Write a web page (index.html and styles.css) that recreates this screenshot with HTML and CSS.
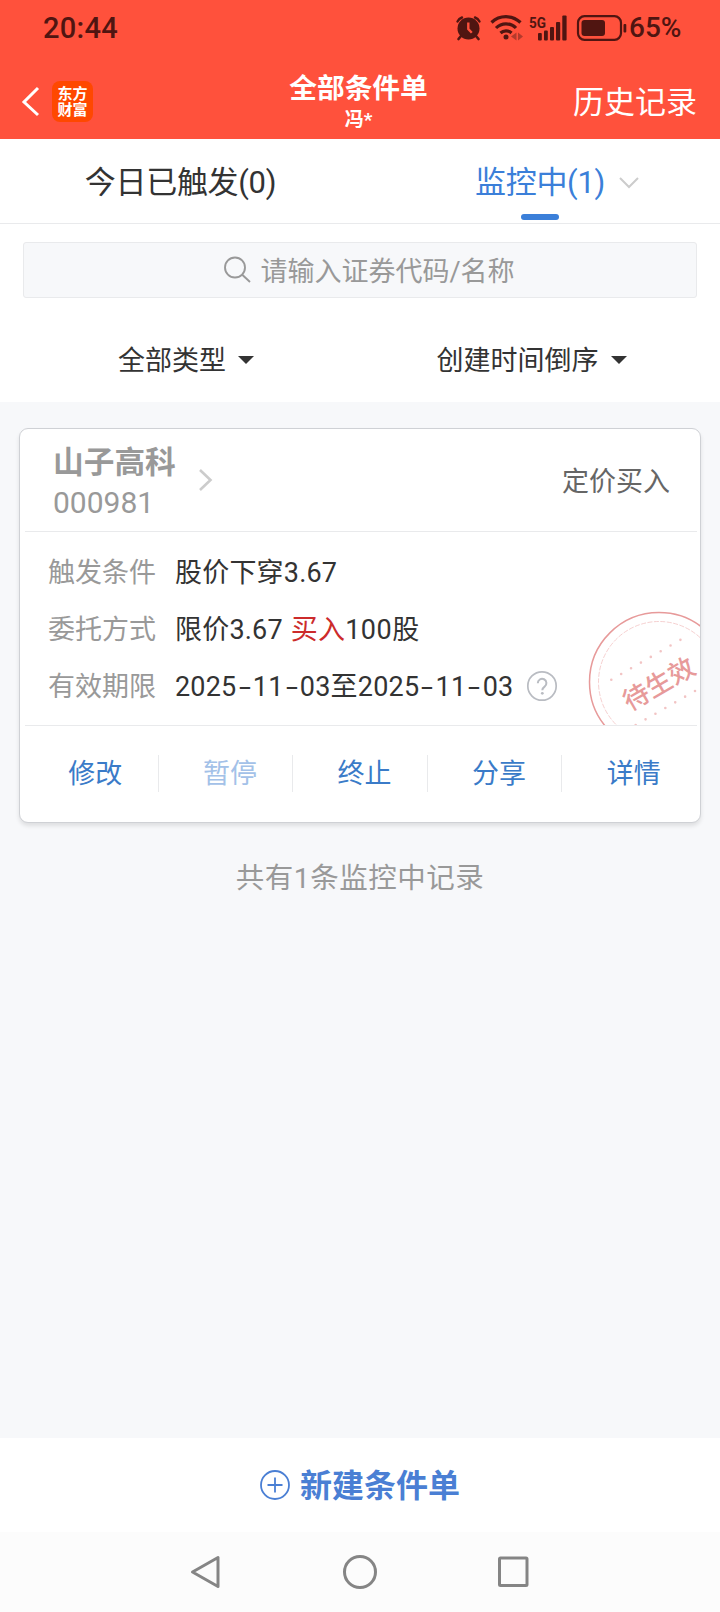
FILE: index.html
```html
<!DOCTYPE html>
<html lang="zh-CN">

<head>
    <meta charset="UTF-8">
    <meta name="viewport" content="width=device-width, initial-scale=1.0">
    <title>全部条件单</title>
    <link rel="stylesheet" href="styles.css">
</head>

<body>
    <header class="top">
        <div class="status">
            <span class="clock">20:44</span>
            <svg class="status-icons" width="174" height="30" viewBox="454 12 174 30">
                <!-- alarm -->
                <g fill="#501511">
                    <circle cx="468.500" cy="27.500" r="11"/>
                    <path d="M461 35l-2.500 3M476 35l2.500 3" stroke="#501511" stroke-width="2.600" stroke-linecap="round"/>
                    <path d="M457.500 20.500a8 8 0 0 1 4.500-4M479.500 20.500a8 8 0 0 0-4.500-4" fill="none" stroke="#501511" stroke-width="2.400" stroke-linecap="round"/>
                </g>
                <path d="M468.300 21.500v6.500l3.500 3.800" fill="none" stroke="#ff513c" stroke-width="2.400"/>
                <!-- wifi -->
                <g fill="none" stroke="#501511" stroke-width="3.200">
                    <path d="M491.500 21.500a21 21 0 0 1 29 0"/>
                    <path d="M496 27a14 14 0 0 1 20 0"/>
                    <path d="M500.500 32a8 8 0 0 1 11 0"/>
                </g>
                <circle cx="506" cy="36" r="2.500" fill="#501511"/>
                <path d="M516.500 31.500v8l-5.500-4zM518 31.500v8l5-4z" fill="#b33a2c"/>
                <text class="net" x="529" y="26.500" textLength="17" lengthAdjust="spacingAndGlyphs">5G</text>
                <g fill="#501511">
                    <rect x="538" y="32" width="3.800" height="7.500" rx="1"/>
                    <rect x="544" y="29.500" width="3.800" height="10" rx="1"/>
                    <rect x="550" y="26" width="4" height="13.500" rx="1"/>
                    <rect x="556" y="21" width="4.200" height="18.500" rx="1"/>
                    <rect x="562.300" y="14.500" width="4.300" height="25" rx="1"/>
                </g>
                <!-- battery -->
                <rect x="578" y="15.200" width="43" height="23.600" rx="6.500" fill="none" stroke="#501511" stroke-width="2.200"/>
                <rect x="581.500" y="19" width="23.500" height="16" rx="3" fill="#501511"/>
                <rect x="623.500" y="23" width="2.800" height="8.500" rx="1" fill="#501511"/>
            </svg>
            <span class="percent">65%</span>
        </div>
        <div class="header">
            <div class="header-left">
                <svg width="20" height="32" viewBox="0 0 20 32">
                    <path d="M18 2L4 16l14 13" fill="none" stroke="#fff" stroke-width="3"/>
                </svg>
                <div class="logo"><span>东方</span><span>财富</span></div>
            </div>
            <div class="header-title">
                <h1>全部条件单</h1>
                <p>冯*</p>
            </div>
            <a class="history">历史记录</a>
        </div>
    </header>

    <nav class="tabs">
        <a class="tab">今日已触发(0)</a>
        <a class="tab active">监控中(1)
            <svg width="20" height="12" viewBox="0 0 20 12">
                <path d="M1 1l9 9 9-9" fill="none" stroke="#ccc" stroke-width="2"/>
            </svg>
        </a>
    </nav>

    <section class="filter-area">
        <div class="search">
            <svg width="28" height="28" viewBox="0 0 28 28" fill="none" stroke="#999" stroke-width="1.900">
                <circle cx="12" cy="11.500" r="10"/>
                <path d="M19 18.500l8 7.500"/>
            </svg>
            <span>请输入证券代码/名称</span>
        </div>
        <div class="filters">
            <a class="filter">全部类型<i class="caret"></i></a>
            <a class="filter">创建时间倒序<i class="caret"></i></a>
        </div>
    </section>

    <main>
        <article class="card">
            <div class="card-head">
                <div class="stock">
                    <h2>山子高科</h2>
                    <p>000981</p>
                </div>
                <svg class="arrow" width="15" height="24" viewBox="0 0 15 24">
                    <path d="M2 2l10.500 10L2 22" fill="none" stroke="#ccc" stroke-width="2.600"/>
                </svg>
                <span class="kind">定价买入</span>
            </div>
            <div class="card-body">
                <div class="row"><label>触发条件</label><span>股价下穿3.67</span></div>
                <div class="row"><label>委托方式</label><span>限价3.67 <em>买入</em><b>100</b>股</span></div>
                <div class="row">
                    <label>有效期限</label>
                    <span>2025<i class="dash">-</i>11<i class="dash">-</i>03至2025<i class="dash">-</i>11<i class="dash">-</i>03</span>
                    <svg class="help" width="32" height="32" viewBox="0 0 32 32">
                        <circle cx="16" cy="16" r="14.200" fill="none" stroke="#b9bcc2" stroke-width="1.700"/>
                        <path d="M11.800 13.200a4.300 4.300 0 1 1 6.800 3.400c-1.500 1.100-2.300 1.800-2.300 3.600" fill="none" stroke="#b9bcc2" stroke-width="2"/>
                        <circle cx="16.300" cy="23.300" r="1.400" fill="#b9bcc2"/>
                    </svg>
                </div>
                <svg class="stamp" width="113" height="115" viewBox="588 610 113 115">
                    <circle cx="660" cy="682" r="69.500" fill="none" stroke="#e79a9a" stroke-width="1.500"/>
                    <circle cx="660" cy="682" r="60.500" fill="none" stroke="#f2c4c4" stroke-width=".8" stroke-dasharray="5 1.500"/>
                    <path class="dots" d="M612.300 679.700L682 639.500M696 691L628 730"/>
                    <text x="659" y="693" transform="rotate(-30 660 682)">待生效</text>
                </svg>
            </div>
            <div class="actions">
                <a>修改</a>
                <a class="disabled">暂停</a>
                <a>终止</a>
                <a>分享</a>
                <a>详情</a>
            </div>
        </article>
        <p class="total">共有1条监控中记录</p>
    </main>

    <footer>
        <a class="create">
            <svg width="30" height="30" viewBox="0 0 30 30" fill="none" stroke="#4a7fd4" stroke-width="1.800">
                <circle cx="15" cy="15" r="14"/>
                <path d="M15 7.500v15M7.500 15h15"/>
            </svg>
            <span>新建条件单</span>
        </a>
        <div class="system-nav">
            <svg width="32" height="36" viewBox="0 0 32 36"><path d="M28 3.500v29L2.500 18z"/></svg>
            <svg width="36" height="36" viewBox="0 0 36 36"><circle cx="18" cy="18" r="15.500"/></svg>
            <svg width="32" height="36" viewBox="0 0 32 36"><rect x="1.500" y="4" width="27.500" height="27.500" rx="1"/></svg>
        </div>
    </footer>
</body>

</html>
```

FILE: styles.css
```css
* {
    box-sizing: border-box;
}

body {
    margin: 0;
    height: 1612px;
    display: flex;
    flex-direction: column;
    font-family: Roboto, "Noto Sans CJK SC", sans-serif;
    font-size: 27px;
    line-height: 1;
    color: #333;
    background-color: #f7f8fa;
}

h1, h2, p {
    margin: 0;
}

i, em {
    font-style: normal;
}

svg {
    flex: none;
}

/* header */
.top {
    height: 139px;
    background-color: #ff513c;
    color: white;
}

.status {
    height: 64px;
    padding: 0 37px 9px 43px;
    display: flex;
    align-items: center;
    color: #501511;
    font-weight: 500;
}

.clock {
    font-size: 29px;
    letter-spacing: 0.3px;
    padding-top: 2px;
    margin-right: auto;
}

.percent {
    font-size: 28px;
    width: 54px;
    margin-left: 1px;
    padding-top: 1px;
}

.net {
    font-size: 15px;
    font-weight: 700;
    fill: #501511;
}

.header {
    height: 75px;
    padding: 0 23px 0 20px;
    display: grid;
    grid-template-columns: 1fr auto 1fr;
    align-items: center;
}

.header-left {
    display: flex;
    align-items: center;
    gap: 12px;
}

.logo {
    width: 41px;
    height: 41px;
    border-radius: 8px;
    background-color: #ff4800;
    display: flex;
    flex-direction: column;
    align-items: center;
    justify-content: center;
    font-size: 15px;
    line-height: 16px;
    font-weight: 700;
}

.header-title {
    padding-top: 2px;
    text-align: center;
}

.header-title h1 {
    font-size: 27.7px;
    line-height: 34px;
    font-weight: 700;
}

.header-title p {
    font-size: 19px;
    line-height: 27px;
    font-weight: 700;
}

.history {
    justify-self: end;
    padding-top: 2px;
    font-size: 31px;
}

/* tabs */
.tabs {
    height: 85px;
    display: flex;
    background-color: white;
    border-bottom: 1px solid #e9eaec;
}

.tab {
    flex: 0 0 50%;
    display: flex;
    align-items: center;
    justify-content: center;
    padding-top: 3px;
    padding-left: 1px;
    font-size: 31px;
    letter-spacing: -0.3px;
}

.tab.active {
    position: relative;
    gap: 14px;
    padding-left: 34px;
    color: #3b7fd9;
}

.tab.active::after {
    content: "";
    position: absolute;
    left: 161px;
    bottom: 3px;
    width: 38px;
    height: 6px;
    border-radius: 3px;
    background-color: #3b7fd9;
}

/* search and filters */
.filter-area {
    height: 178px;
    padding: 18px 23px 0;
    background-color: white;
}

.search {
    height: 56px;
    padding-left: 18px;
    display: flex;
    align-items: center;
    justify-content: center;
    gap: 9px;
    color: #999;
    background-color: #f7f8fa;
    border: 1px solid #e9eaec;
    border-radius: 3px;
}

.search span {
    padding-top: 4px;
}

.filters {
    height: 104px;
    margin: 0 -23px;
    padding-top: 23px;
    display: flex;
}

.filter {
    flex: 0 0 50%;
    display: flex;
    align-items: center;
    justify-content: center;
    gap: 12px;
    padding-left: 12px;
}

.filter + .filter {
    padding-left: 0;
    padding-right: 17px;
}

.caret {
    margin-top: -3px;
    border: 8px solid transparent;
    border-top-color: #333;
    border-bottom: 0;
}

/* order card */
main {
    flex: 1;
    padding: 26px 19px 0;
}

.card {
    height: 395px;
    background-color: white;
    border: 1px solid #cfd1d5;
    border-radius: 9px;
    box-shadow: 0 3px 4px rgba(0, 0, 0, 0.1);
}

.card-head {
    height: 103px;
    margin: 0 3px 0 5px;
    padding: 0 27px 0 28px;
    display: flex;
    align-items: center;
    border-bottom: 1px solid #e9eaec;
}

.stock {
    padding-top: 5px;
    color: #999;
}

.stock h2 {
    font-size: 30.7px;
    line-height: 40px;
    font-weight: 700;
}

.stock p {
    font-size: 30px;
    line-height: 40px;
}

.arrow {
    margin-left: 22px;
}

.kind {
    margin-left: auto;
    padding-top: 5px;
    color: #666;
}

.card-body {
    position: relative;
    height: 194px;
    margin: 0 3px 0 5px;
    padding: 13px 0 0 23px;
    border-bottom: 1px solid #e9eaec;
}

.row {
    height: 57px;
    display: flex;
    align-items: center;
    letter-spacing: 0.2px;
}

.row label {
    width: 127px;
    color: #999;
    letter-spacing: 0;
}

.row em {
    margin-left: 1px;
    color: #cc2b2b;
}

.row b {
    font-weight: 400;
    letter-spacing: 0.5px;
}

.dash {
    display: inline-block;
    width: 16.3px;
    text-align: center;
    transform: scaleX(1.6);
}

.help {
    margin: -4px 0 0 13px;
}

.stamp {
    position: absolute;
    right: -3px;
    bottom: 0;
}

.stamp text {
    font-size: 26px;
    font-weight: 500;
    text-anchor: middle;
    fill: #e79a9a;
}

.dots {
    fill: none;
    stroke: #f2c4c4;
    stroke-width: 2.6;
    stroke-linecap: round;
    stroke-dasharray: 0 11.4;
}

.actions {
    height: 96px;
    margin: 0 4px 0 4px;
    display: flex;
    align-items: center;
    padding-bottom: 2px;
}

.actions a {
    flex: 1;
    height: 37px;
    padding: 3px 0 0 9px;
    display: flex;
    align-items: center;
    justify-content: center;
    color: #3a7bc8;
    border-right: 1px solid #e9eaec;
}

.actions a:last-child {
    border-right: 0;
}

.actions .disabled {
    color: #a3c1e8;
}

.total {
    margin-top: 42px;
    font-size: 28.5px;
    letter-spacing: 0.5px;
    text-align: center;
    color: #999;
}

/* bottom */
.create {
    height: 94px;
    display: flex;
    align-items: center;
    justify-content: center;
    gap: 10px;
    background-color: white;
    color: #4a7fd4;
    font-size: 32px;
    font-weight: 700;
}

.create span {
    padding-top: 2px;
}

.system-nav {
    height: 80px;
    display: flex;
    align-items: center;
    justify-content: center;
    gap: 120px;
    background-color: #fcfcfc;
}

.system-nav svg {
    fill: none;
    stroke: #858585;
    stroke-width: 3;
    stroke-linejoin: round;
}
```
